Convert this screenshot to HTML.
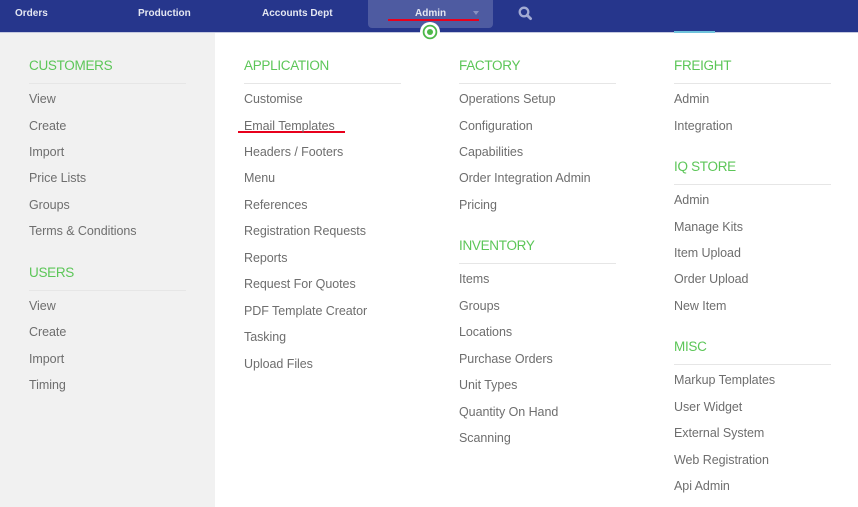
<!DOCTYPE html>
<html><head><meta charset="utf-8"><style>
html,body{margin:0;padding:0;background:#fff}
body{width:858px;height:507px;position:relative;overflow:hidden;font-family:"Liberation Sans",sans-serif}
div{position:absolute;white-space:nowrap}
.n{top:7px;height:14px;line-height:14px;font-size:10px;font-weight:bold;color:#e4e7f2;filter:blur(.3px)}
.h{font-size:13.5px;letter-spacing:-.3px;line-height:18px;height:18px;color:#5cc658;filter:blur(.3px)}
.l{height:1px;background:#e6e6e6;width:157px}
.i{font-size:12.5px;letter-spacing:-.05px;line-height:16px;height:16px;color:#6e6e6e;filter:blur(.3px)}
</style></head><body>
<div style="left:0;top:32px;width:215px;height:475px;background:#f1f1f1"></div>
<div style="left:0;top:0;width:858px;height:32px;background:#26368c"></div>
<div style="left:0;top:32px;width:858px;height:1px;background:#c5c9df"></div>
<div style="left:674px;top:31px;width:41px;height:2px;background:#6fc3dc"></div>
<div style="left:368px;top:0;width:125px;height:28px;background:#4e5ba1;border-radius:0 0 4px 4px"></div>
<div class="n" style="left:15px">Orders</div>
<div class="n" style="left:138px">Production</div>
<div class="n" style="left:262px">Accounts Dept</div>
<div class="n" style="left:415px">Admin</div>
<div style="left:473px;top:11px;width:0;height:0;border-left:3px solid transparent;border-right:3px solid transparent;border-top:4px solid #8891c2"></div>
<svg style="position:absolute;left:518px;top:6px" width="15" height="15" viewBox="0 0 15 15"><circle cx="6" cy="6" r="4.3" fill="none" stroke="#a3abd3" stroke-width="2.3"/><path d="M9.2 9.2L12.6 12.6" stroke="#a3abd3" stroke-width="2.8" stroke-linecap="round"/></svg>
<div style="left:388px;top:19px;width:91px;height:2px;background:#e8001c"></div>
<svg style="position:absolute;left:420px;top:22px" width="20" height="20" viewBox="0 0 20 20"><circle cx="10" cy="10" r="10" fill="#fff"/><circle cx="10" cy="10" r="6.4" fill="none" stroke="#4cb848" stroke-width="1.8"/><circle cx="10" cy="10" r="3" fill="#4cb848"/></svg>
<div style="left:238px;top:131px;width:107px;height:2px;background:#e8001c"></div>

<div class="h" style="left:29px;top:57px">CUSTOMERS</div><div class="l" style="left:29px;top:83px"></div>
<div class="i" style="left:29px;top:91px">View</div>
<div class="i" style="left:29px;top:118px">Create</div>
<div class="i" style="left:29px;top:144px">Import</div>
<div class="i" style="left:29px;top:170px">Price Lists</div>
<div class="i" style="left:29px;top:197px">Groups</div>
<div class="i" style="left:29px;top:223px">Terms &amp; Conditions</div>
<div class="h" style="left:29px;top:264px">USERS</div><div class="l" style="left:29px;top:290px"></div>
<div class="i" style="left:29px;top:298px">View</div>
<div class="i" style="left:29px;top:324px">Create</div>
<div class="i" style="left:29px;top:351px">Import</div>
<div class="i" style="left:29px;top:377px">Timing</div>

<div class="h" style="left:244px;top:57px">APPLICATION</div><div class="l" style="left:244px;top:83px"></div>
<div class="i" style="left:244px;top:91px">Customise</div>
<div class="i" style="left:244px;top:118px">Email Templates</div>
<div class="i" style="left:244px;top:144px">Headers / Footers</div>
<div class="i" style="left:244px;top:170px">Menu</div>
<div class="i" style="left:244px;top:197px">References</div>
<div class="i" style="left:244px;top:223px">Registration Requests</div>
<div class="i" style="left:244px;top:250px">Reports</div>
<div class="i" style="left:244px;top:276px">Request For Quotes</div>
<div class="i" style="left:244px;top:303px">PDF Template Creator</div>
<div class="i" style="left:244px;top:329px">Tasking</div>
<div class="i" style="left:244px;top:356px">Upload Files</div>

<div class="h" style="left:459px;top:57px">FACTORY</div><div class="l" style="left:459px;top:83px"></div>
<div class="i" style="left:459px;top:91px">Operations Setup</div>
<div class="i" style="left:459px;top:118px">Configuration</div>
<div class="i" style="left:459px;top:144px">Capabilities</div>
<div class="i" style="left:459px;top:170px">Order Integration Admin</div>
<div class="i" style="left:459px;top:197px">Pricing</div>
<div class="h" style="left:459px;top:237px">INVENTORY</div><div class="l" style="left:459px;top:263px"></div>
<div class="i" style="left:459px;top:271px">Items</div>
<div class="i" style="left:459px;top:298px">Groups</div>
<div class="i" style="left:459px;top:324px">Locations</div>
<div class="i" style="left:459px;top:351px">Purchase Orders</div>
<div class="i" style="left:459px;top:377px">Unit Types</div>
<div class="i" style="left:459px;top:404px">Quantity On Hand</div>
<div class="i" style="left:459px;top:430px">Scanning</div>

<div class="h" style="left:674px;top:57px">FREIGHT</div><div class="l" style="left:674px;top:83px"></div>
<div class="i" style="left:674px;top:91px">Admin</div>
<div class="i" style="left:674px;top:118px">Integration</div>
<div class="h" style="left:674px;top:158px">IQ STORE</div><div class="l" style="left:674px;top:184px"></div>
<div class="i" style="left:674px;top:192px">Admin</div>
<div class="i" style="left:674px;top:219px">Manage Kits</div>
<div class="i" style="left:674px;top:245px">Item Upload</div>
<div class="i" style="left:674px;top:271px">Order Upload</div>
<div class="i" style="left:674px;top:298px">New Item</div>
<div class="h" style="left:674px;top:338px">MISC</div><div class="l" style="left:674px;top:364px"></div>
<div class="i" style="left:674px;top:372px">Markup Templates</div>
<div class="i" style="left:674px;top:399px">User Widget</div>
<div class="i" style="left:674px;top:425px">External System</div>
<div class="i" style="left:674px;top:452px">Web Registration</div>
<div class="i" style="left:674px;top:478px">Api Admin</div>
</body></html>
